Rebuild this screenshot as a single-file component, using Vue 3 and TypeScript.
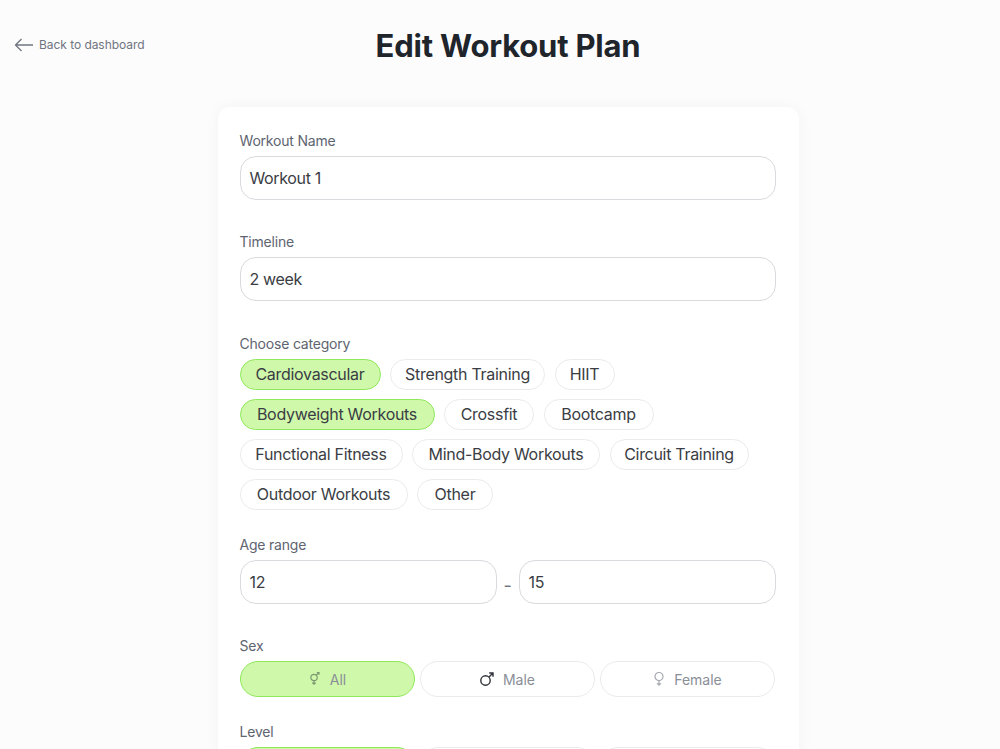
<script setup lang="ts">
const categories = [
  { name: 'Cardiovascular', on: true, w: 141 },
  { name: 'Strength Training', on: false, w: 155 },
  { name: 'HIIT', on: false, w: 60 },
  { name: 'Bodyweight Workouts', on: true, w: 195 },
  { name: 'Crossfit', on: false, w: 90 },
  { name: 'Bootcamp', on: false, w: 110 },
  { name: 'Functional Fitness', on: false, w: 163 },
  { name: 'Mind-Body Workouts', on: false, w: 188 },
  { name: 'Circuit Training', on: false, w: 139 },
  { name: 'Outdoor Workouts', on: false, w: 168 },
  { name: 'Other', on: false, w: 76 },
]
</script>

<template>
  <div class="page">
    <header class="top">
      <a class="back">
        <svg width="20" height="14" viewBox="0 0 20 14" fill="none" stroke="#6f7480" stroke-width="1.3"><path d="M19 7H1.5M7.5 1 1.5 7l6 6" /></svg>
        <span>Back to dashboard</span>
      </a>
      <h1>Edit Workout Plan</h1>
    </header>
    <main class="card">
      <section class="field first">
        <label>Workout Name</label>
        <div class="input">Workout 1</div>
      </section>
      <section class="field">
        <label>Timeline</label>
        <div class="input">2 week</div>
      </section>
      <section class="field tight">
        <label>Choose category</label>
        <div class="chips">
          <span v-for="c in categories" :key="c.name" class="chip" :class="{ on: c.on }" :style="{ width: c.w + 'px' }">{{ c.name }}</span>
        </div>
      </section>
      <section class="field first">
        <label>Age range</label>
        <div class="range">
          <div class="input">12</div>
          <span class="dash">-</span>
          <div class="input">15</div>
        </div>
      </section>
      <section class="field tight">
        <label>Sex</label>
        <div class="pills">
          <div class="pill on">
            <svg width="14" height="16" viewBox="0 0 14 16" fill="none" stroke="#7c9a72" stroke-width="1.2"><circle cx="6" cy="6.5" r="3.2" /><path d="M6 9.7V14M4 12.2h4M8.3 4.2 11 1.5M8.8 1.5H11v2.2" /></svg>
            <span>All</span>
          </div>
          <div class="pill">
            <svg width="16" height="16" viewBox="0 0 16 16" fill="none" stroke="#2f3238" stroke-width="1.4"><circle cx="6.5" cy="9.5" r="4.7" /><path d="M10 6 14 2M10.2 2H14v3.8" /></svg>
            <span>Male</span>
          </div>
          <div class="pill">
            <svg width="14" height="16" viewBox="0 0 14 16" fill="none" stroke="#a3a6ad" stroke-width="1.2"><circle cx="7" cy="5.5" r="4" /><path d="M7 9.5V15M4.8 12.8h4.4" /></svg>
            <span>Female</span>
          </div>
        </div>
      </section>
      <section class="field">
        <label>Level</label>
        <div class="pills">
          <div class="pill on"></div>
          <div class="pill"></div>
          <div class="pill"></div>
        </div>
      </section>
    </main>
  </div>
</template>

<style>
html, body { margin: 0; background: #fcfcfc; }
</style>

<style scoped>
.page {
  height: 749px;
  overflow: hidden;
  box-sizing: border-box;
  padding: 24px 0 0 16px;
  font-family: "Inter", "Noto Sans", sans-serif;
  color: #2f3238;
}
.top { position: relative; height: 83px; }
.back {
  position: absolute;
  left: -2px;
  top: 13px;
  display: flex;
  align-items: center;
  gap: 5px;
  font-size: 12px;
  letter-spacing: -0.05px;
  color: #6f7480;
}
h1 {
  margin: 0;
  text-align: center;
  font-size: 31px;
  line-height: 44px;
  font-weight: 700;
  letter-spacing: -0.2px;
  color: #20242b;
}
.card {
  width: 581px;
  margin: 0 auto;
  box-sizing: border-box;
  padding: 24px 23px 24px 22px;
  background: #fff;
  border-radius: 12px 12px 0 0;
  box-shadow: 0 0 16px rgba(30, 30, 50, 0.04);
}
.field { margin-bottom: 33px; }
.field.first { margin-bottom: 32px; }
.field.tight { margin-bottom: 25px; }
label {
  display: block;
  font-size: 14px;
  line-height: 20px;
  margin-bottom: 5px;
  letter-spacing: -0.2px;
  color: #5e6470;
}
.input {
  flex: 1;
  height: 44px;
  box-sizing: border-box;
  display: flex;
  align-items: center;
  padding: 0 9px;
  border: 1px solid #d8dade;
  border-radius: 16px;
  font-size: 16px;
  letter-spacing: -0.35px;
  color: #3a3d44;
}
.chips { display: flex; flex-wrap: wrap; gap: 9px 9.5px; }
.chip {
  height: 31px;
  box-sizing: border-box;
  display: flex;
  align-items: center;
  justify-content: center;
  padding-bottom: 2px;
  border: 1px solid #ebebed;
  border-radius: 16px;
  font-size: 16px;
  letter-spacing: -0.3px;
  color: #3a3d44;
}
.on {
  background: #d0f8ab;
  border-color: #8fe85a !important;
}
.range { display: flex; align-items: center; gap: 7px; }
.dash { width: 8px; text-align: center; font-size: 18px; color: #6f7480; padding-top: 6px; }
.pills { display: grid; grid-template-columns: repeat(3, 175px); gap: 5px; }
.pill {
  height: 36px;
  box-sizing: border-box;
  display: flex;
  align-items: center;
  justify-content: center;
  gap: 8px;
  border: 1px solid #ebebed;
  border-radius: 18px;
  font-size: 14px;
  color: #8a8e97;
}
</style>
